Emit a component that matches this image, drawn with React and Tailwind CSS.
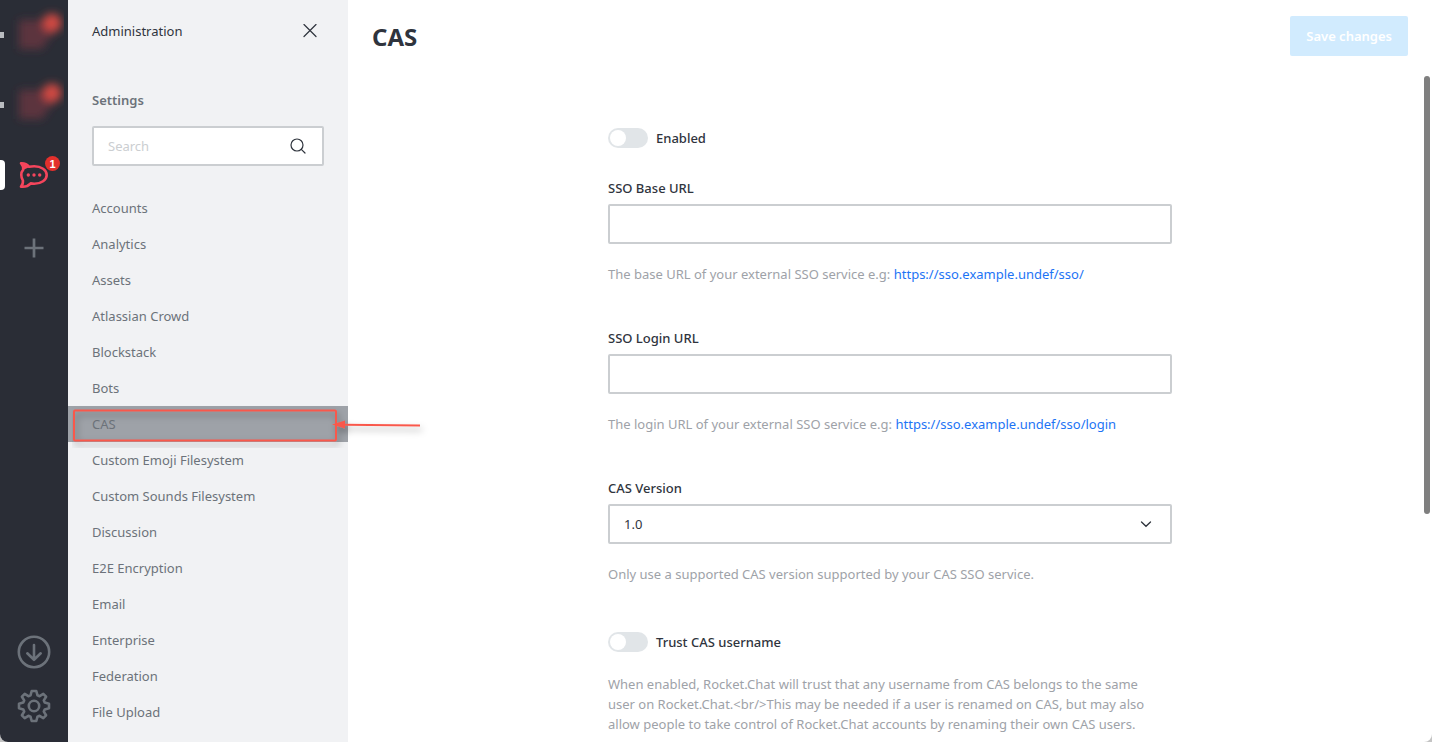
import { useState } from "react";

const sections = [
  "Accounts",
  "Analytics",
  "Assets",
  "Atlassian Crowd",
  "Blockstack",
  "Bots",
  "CAS",
  "Custom Emoji Filesystem",
  "Custom Sounds Filesystem",
  "Discussion",
  "E2E Encryption",
  "Email",
  "Enterprise",
  "Federation",
  "File Upload",
];

function BlurredServer({ label }) {
  return (
    <button type="button" aria-label={label} className="flex h-[70px] w-full items-center">
      <span className="h-1.5 w-1 bg-[#b9bcc0]" />
      <svg width="60" height="70" viewBox="0 0 60 70" aria-hidden="true">
        <defs>
          <filter id="soften" x="-50%" y="-50%" width="200%" height="200%">
            <feGaussianBlur stdDeviation="4.5" />
          </filter>
        </defs>
        <g filter="url(#soften)">
          <path d="M15 20H46L48 34L38 49H15Z" fill="#6e3542" opacity="0.75" />
          <circle cx="48" cy="23" r="9.5" fill="#d04a42" />
        </g>
      </svg>
    </button>
  );
}

function RocketLogo() {
  return (
    <svg width="30" height="28" viewBox="0 0 30 28" fill="none" aria-hidden="true">
      <path
        d="M2 2.200C5.500 2 8.200 3.300 10 5.800C11.600 5.500 13.300 5.300 15.200 5.300C22.200 5.300 27.700 9 27.700 14C27.700 19 22.200 22.700 15.200 22.700C14 22.700 12.800 22.600 11.700 22.400C9.500 24.800 6 26.200 2 25.700C3.600 24 4.200 22 3.900 19.400C2.800 17.800 2.300 16 2.300 14C2.300 12 2.900 10.200 4.200 8.700C4.300 6.200 3.600 4 2 2.200Z"
        stroke="#f5455c"
        strokeWidth="2.600"
        strokeLinejoin="round"
      />
      <path d="M2.500 2.500C6 2.600 8 4 9.500 6.500L5 8.500C5 6 4.500 4 2.500 2.500Z" fill="#f5455c" />
      <circle cx="9.300" cy="14" r="1.700" fill="#f5455c" />
      <circle cx="15" cy="14" r="1.700" fill="#f5455c" />
      <circle cx="20.700" cy="14" r="1.700" fill="#f5455c" />
    </svg>
  );
}

function ServerRail() {
  return (
    <div className="flex w-[68px] shrink-0 flex-col bg-[#2a2d36]">
      <BlurredServer label="Server 1" />
      <BlurredServer label="Server 2" />
      <button type="button" aria-label="Current server" className="flex h-[70px] w-full items-center">
        <span className="h-[30px] w-[5px] rounded-r bg-white" />
        <span className="relative ml-3.5">
          <RocketLogo />
          <span className="absolute -top-[5px] left-[26px] flex size-[15px] items-center justify-center rounded-full bg-[#e3302c] font-['Liberation_Sans',sans-serif] text-[11px] font-bold text-white">
            1
          </span>
        </span>
      </button>
      <button type="button" aria-label="Add server" className="flex h-[76px] items-center justify-center">
        <svg width="20" height="20" viewBox="0 0 20 20" stroke="#6c727a" strokeWidth="2.700" aria-hidden="true">
          <path d="M10 0.500V19.500M0.500 10H19.500" />
        </svg>
      </button>
      <div className="mt-auto flex flex-col items-center gap-5 pb-[19px]">
        <button type="button" aria-label="Downloads">
          <svg width="34" height="34" viewBox="0 0 34 34" fill="none" stroke="#6c727a" strokeWidth="2.600" strokeLinecap="round" strokeLinejoin="round" aria-hidden="true">
            <circle cx="17" cy="17" r="15.200" />
            <path d="M17 10V24.500M10.300 18.300L17 24.800L23.700 18.300" />
          </svg>
        </button>
        <button type="button" aria-label="Preferences">
          <svg width="34" height="34" viewBox="0 0 34 34" fill="none" stroke="#6c727a" strokeWidth="2.600" strokeLinejoin="round" aria-hidden="true">
            <circle cx="17" cy="17" r="5.200" />
            <path d="M14.700 2H19.300L20.500 6.300L22.600 7.200L26.300 4.900L29.100 7.700L26.800 11.400L27.700 13.500L32 14.700V19.300L27.700 20.500L26.800 22.600L29.100 26.300L26.300 29.100L22.600 26.800L20.500 27.700L19.300 32H14.700L13.500 27.700L11.400 26.800L7.700 29.100L4.900 26.300L7.200 22.600L6.300 20.500L2 19.300V14.700L6.300 13.500L7.200 11.400L4.900 7.700L7.700 4.900L11.400 7.200L13.500 6.300Z" />
          </svg>
        </button>
      </div>
    </div>
  );
}

function Callout() {
  return (
    <span className="pointer-events-none absolute inset-y-0 left-1 z-10 flex items-center" aria-hidden="true">
      <svg width="360" height="48" viewBox="0 0 360 48" fill="none">
        <defs>
          <filter id="drop" x="-10%" y="-50%" width="120%" height="220%">
            <feDropShadow dx="2" dy="4" stdDeviation="3.5" floodColor="#000000" floodOpacity="0.35" />
          </filter>
        </defs>
        <g filter="url(#drop)">
          <rect x="2" y="10.500" width="262" height="30" rx="1" stroke="#f9594c" strokeWidth="2" />
          <path d="M272 24.700L348 25.500" stroke="#f9594c" strokeWidth="2" />
          <path d="M260 24.600L273 20.600V28.600Z" fill="#f9594c" />
        </g>
      </svg>
    </span>
  );
}

function Sidebar() {
  return (
    <aside className="relative z-10 w-[280px] shrink-0 bg-[#f1f2f4]">
      <header className="flex h-[62px] items-center justify-between px-6">
        <span className="text-[#2f343d]">Administration</span>
        <button type="button" aria-label="Close" className="flex size-7 items-center justify-center">
          <svg width="14" height="14" viewBox="0 0 14 14" stroke="#2f343d" strokeWidth="1.200" strokeLinecap="round" aria-hidden="true">
            <path d="M1 0.500L13 12.500M13 0.500L1 12.500" />
          </svg>
        </button>
      </header>
      <div className="mt-7 px-6">
        <label htmlFor="search" className="block font-semibold text-[#6c727a]">
          Settings
        </label>
        <div className="mt-4 flex h-10 items-center rounded-xs border-2 border-[#cbced1] bg-white pr-4 pl-3.5">
          <input
            id="search"
            type="text"
            placeholder="Search"
            className="min-w-0 flex-1 bg-transparent outline-none placeholder:text-[#cbced1]"
          />
          <svg width="16" height="16" viewBox="0 0 16 16" fill="none" stroke="#2f343d" strokeWidth="1.200" strokeLinecap="round" aria-hidden="true">
            <circle cx="7" cy="7" r="6" />
            <path d="M11.300 11.300L15 15" />
          </svg>
        </div>
      </div>
      <nav className="mt-6">
        {sections.map((name) => (
          <a
            key={name}
            href="#"
            className={
              name === "CAS"
                ? "relative flex h-9 items-center bg-[#9ea2a8] px-6 text-[#6c727a]"
                : "flex h-9 items-center px-6 text-[#6c727a]"
            }
          >
            {name}
            {name === "CAS" && <Callout />}
          </a>
        ))}
      </nav>
    </aside>
  );
}

function Toggle({ id, label }) {
  return (
    <div className="flex items-center gap-2">
      <input
        id={id}
        type="checkbox"
        className="relative h-5 w-10 appearance-none rounded-full bg-[#e1e5e8] before:absolute before:top-0.5 before:left-0.5 before:size-4 before:rounded-full before:bg-white checked:bg-[#1d74f5] checked:before:left-[22px]"
      />
      <label htmlFor={id} className="font-medium text-[#2f343d]">
        {label}
      </label>
    </div>
  );
}

function TextField({ id, label, hint, link }) {
  const [value, setValue] = useState("");
  return (
    <div>
      <label htmlFor={id} className="block font-medium text-[#2f343d]">
        {label}
      </label>
      <input
        id={id}
        type="text"
        value={value}
        onChange={(event) => setValue(event.target.value)}
        className="mt-1.5 block h-10 w-full rounded-xs border-2 border-[#cbced1] bg-white px-3.5 outline-none"
      />
      <p className="mt-5 text-[#9ea2a8]">
        {hint}{" "}
        <a href={link} className="text-[#1d74f5]">
          {link}
        </a>
      </p>
    </div>
  );
}

export default function App() {
  return (
    <div className="h-screen bg-[#c4c4c4]">
      <div className="flex h-full overflow-hidden rounded-b-lg bg-white font-['Noto_Sans','Open_Sans',sans-serif] text-[13px] leading-5">
        <ServerRail />
        <Sidebar />
        <main className="relative flex min-w-0 flex-1 flex-col">
          <header className="flex h-[76px] shrink-0 items-start justify-between px-6 pt-4">
            <h1 className="text-2xl leading-[42px] font-bold text-[#2f343d]">CAS</h1>
            <button type="button" disabled className="h-10 rounded-xs bg-[#d1ebfe] px-4 font-semibold text-white">
              Save changes
            </button>
          </header>
          <div className="min-h-0 flex-1 overflow-hidden px-6 pt-[52px]">
            <form className="mx-auto max-w-[564px]">
              <Toggle id="enabled" label="Enabled" />
              <div className="mt-[30px] flex flex-col gap-11">
                <TextField
                  id="base-url"
                  label="SSO Base URL"
                  hint="The base URL of your external SSO service e.g:"
                  link="https://sso.example.undef/sso/"
                />
                <TextField
                  id="login-url"
                  label="SSO Login URL"
                  hint="The login URL of your external SSO service e.g:"
                  link="https://sso.example.undef/sso/login"
                />
                <div>
                  <label htmlFor="version" className="block font-medium text-[#2f343d]">
                    CAS Version
                  </label>
                  <div className="relative mt-1.5">
                    <select
                      id="version"
                      className="block h-10 w-full appearance-none rounded-xs border-2 border-[#cbced1] bg-white px-3.5 text-[#2f343d] outline-none"
                    >
                      <option>1.0</option>
                      <option>2.0</option>
                    </select>
                    <svg
                      width="12"
                      height="8"
                      viewBox="0 0 12 8"
                      fill="none"
                      stroke="#2f343d"
                      strokeWidth="1.300"
                      strokeLinecap="round"
                      className="pointer-events-none absolute top-4 right-5"
                      aria-hidden="true"
                    >
                      <path d="M1.500 2L6 6.300L10.500 2" />
                    </svg>
                  </div>
                  <p className="mt-5 text-[#9ea2a8]">Only use a supported CAS version supported by your CAS SSO service.</p>
                </div>
              </div>
              <div className="mt-12">
                <Toggle id="trust" label="Trust CAS username" />
                <p className="mt-[22px] pr-3 text-[#9ea2a8]">
                  {
                    "When enabled, Rocket.Chat will trust that any username from CAS belongs to the same user on Rocket.Chat.<br/>This may be needed if a user is renamed on CAS, but may also allow people to take control of Rocket.Chat accounts by renaming their own CAS users."
                  }
                </p>
              </div>
            </form>
          </div>
          <span className="absolute top-[76px] right-0.5 h-[438px] w-1.5 rounded-full bg-[#7f7f7f]" aria-hidden="true" />
        </main>
      </div>
    </div>
  );
}
